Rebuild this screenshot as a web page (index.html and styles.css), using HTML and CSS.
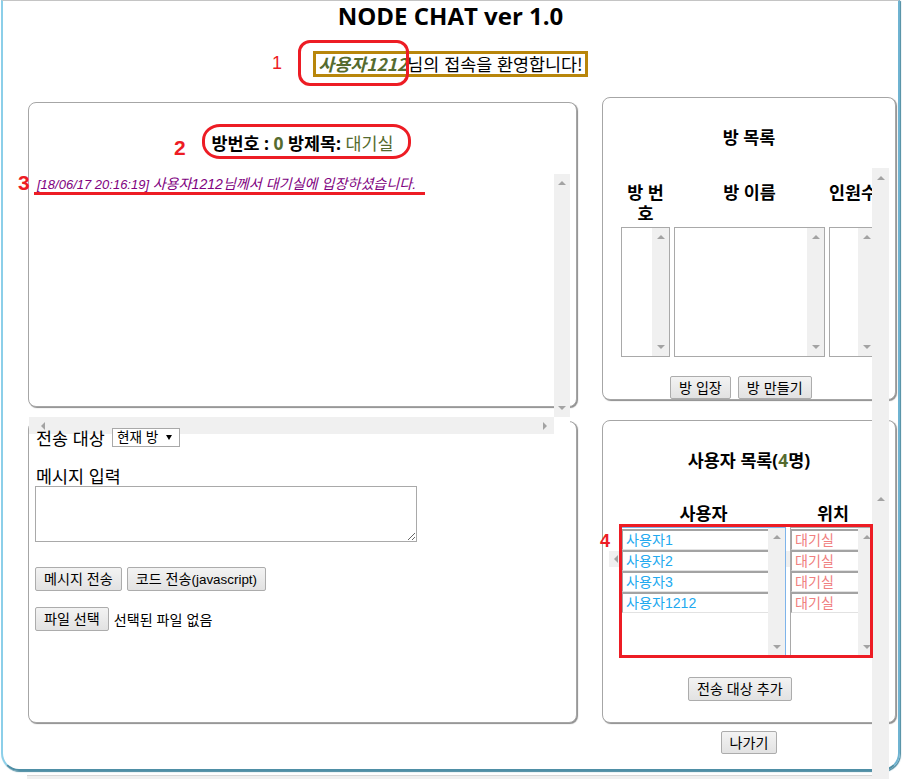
FILE: index.html
```html
<!DOCTYPE html>
<html lang="ko">
<head>
<meta charset="utf-8">
<title>NODE CHAT</title>
<link rel="stylesheet" href="styles.css">
</head>
<body>
<div class="page">
  <h1 class="title">NODE CHAT ver 1.0</h1>
  <div class="welcome-row"><span class="welcome"><b class="nick">사용자1212</b>님의 접속을 환영합니다!</span></div>
  <div class="main">
    <div class="col-left">
      <section class="panel panel-chat">
        <h2 class="panel-title">방번호 : <span class="olive">0</span> 방제목: <span class="olive thin">대기실</span></h2>
        <div class="log">
          <div class="log-body"><p class="msg">[18/06/17 20:16:19] <span class="ko">사용자1212님께서 대기실에 입장하셨습니다.</span></p></div>
          <div class="sb"><i class="up"></i><i class="down"></i></div>
          <div class="hsb"><i class="left"></i><i class="right"></i></div>
          <div class="corner"></div>
        </div>
      </section>
      <section class="panel panel-send">
        <div class="row-target"><span class="label">전송 대상</span><span class="select">현재 방<i class="caret"></i></span></div>
        <div class="label msg-label">메시지 입력</div>
        <textarea class="input"></textarea>
        <div class="btn-row"><button class="btn">메시지 전송</button><button class="btn">코드 전송<span class="lat">(javascript)</span></button></div>
        <div class="file-row"><button class="btn">파일 선택</button><span class="file-text">선택된 파일 없음</span></div>
      </section>
    </div>
    <div class="col-right">
      <section class="panel panel-rooms">
        <h3 class="panel-title">방 목록</h3>
        <div class="room-grid">
          <div class="th">방 번 호</div>
          <div class="th">방 이름</div>
          <div class="th nowrap">인원수</div>
          <div class="listbox"><div class="lb-items"></div><div class="sb"><i class="up"></i><i class="down"></i></div></div>
          <div class="listbox"><div class="lb-items"></div><div class="sb"><i class="up"></i><i class="down"></i></div></div>
          <div class="listbox"><div class="lb-items"></div><div class="sb"><i class="up"></i><i class="down"></i></div></div>
        </div>
        <div class="room-btns"><button class="btn btn-sm">방 입장</button><button class="btn btn-sm">방 만들기</button></div>
      </section>
      <section class="panel panel-users">
        <h3 class="panel-title">사용자 목록(<span class="olive">4</span>명)</h3>
        <div class="peek-bar"><i class="left"></i></div>
        <div class="user-grid">
          <div class="th">사용자</div>
          <div class="th">위치</div>
          <div class="listbox focus">
            <div class="lb-items">
              <div class="opt user">사용자1</div>
              <div class="opt user">사용자2</div>
              <div class="opt user">사용자3</div>
              <div class="opt user">사용자1212</div>
            </div>
            <div class="sb"><i class="up"></i><i class="down"></i></div>
          </div>
          <div class="listbox">
            <div class="lb-items">
              <div class="opt loc">대기실</div>
              <div class="opt loc">대기실</div>
              <div class="opt loc">대기실</div>
              <div class="opt loc">대기실</div>
            </div>
            <div class="sb"><i class="up"></i><i class="down"></i></div>
          </div>
        </div>
        <button class="btn add-btn">전송 대상 추가</button>
      </section>
      <button class="btn btn-sm exit-btn">나가기</button>
    </div>
  </div>
</div>
<div class="page-hbar"></div>

<div class="side-strip"><i class="up"></i><i class="up second"></i></div>

<div class="mark m1">1</div>
<div class="ring r1"></div>
<div class="mark m2">2</div>
<div class="ring r2"></div>
<div class="mark m3">3</div>
<div class="underline u3"></div>
<div class="mark m4">4</div>
<div class="ring r4"></div>
</body>
</html>
```
FILE: styles.css
```css
* { box-sizing: border-box; }
html, body { margin: 0; padding: 0; }
body {
  background: #fff;
  color: #000;
  font-family: "Liberation Sans", "Noto Sans CJK KR", sans-serif;
  font-size: 14px;
  height: 779px;
  overflow: hidden;
}

.page {
  margin-left: 1px;
  width: 899px;
  height: 771px;
  border-top: 1px solid #c4c4c4;
  border-left: 2px solid #8ccfe9;
  border-right: 2px solid #6fb3d1;
  border-bottom: 2px solid #4f8fa6;
  border-radius: 0 0 18px 18px;
  box-shadow: 1px 1px 1px #4a8aa0;
}

.title {
  margin: 0;
  font: bold 24px/30px "Open Sans", "Noto Sans CJK KR", sans-serif;
  text-align: center;
}

.welcome-row {
  margin-top: 20px;
  display: flex;
  justify-content: center;
}
.welcome {
  display: block;
  border: 3px solid #b8860b;
  padding: 0 2px;
  font: 17.4px/20px "Noto Sans CJK KR", sans-serif;
}
.nick { font-style: italic; font-weight: bold; color: #556b2f; }
.olive { color: #556b2f; }
.thin { font-weight: normal; }

.main {
  display: flex;
  align-items: flex-start;
  gap: 25px;
  padding-left: 25px;
  margin-top: 20px;
}
.col-left { width: 549px; margin-top: 5px; display: flex; flex-direction: column; gap: 14px; }
.col-right { width: 294px; display: flex; flex-direction: column; }

.panel {
  position: relative;
  background: #fff;
  border: 1px solid #a6a6a6;
  border-radius: 8px;
  box-shadow: 1px 1px 1px #8c8c8c;
}
.panel-title {
  margin: 0;
  font: bold 17.4px/20px "Open Sans", "Noto Sans CJK KR", sans-serif;
  text-align: center;
}

/* chat panel */
.panel-chat { height: 305px; padding-top: 30px; }
.log {
  position: relative;
  z-index: 2;
  margin-top: 21px;
  width: 541px;
  height: 260px;
  display: grid;
  grid-template-columns: 1fr 16px;
  grid-template-rows: 1fr 17px;
}
.log-body { padding: 2px 8px; }
.msg {
  margin: 0;
  color: #800080;
  font-style: italic;
  font-size: 13px;
  line-height: 16px;
}
.msg .ko { font-size: 14.1px; }
.corner { background: #fff; }

/* fake scrollbars */
.sb {
  width: 17px;
  flex: none;
  background: #f0f0f0;
  display: flex;
  flex-direction: column;
  justify-content: space-between;
  align-items: center;
  padding: 7px 0;
}
.log .sb { width: 16px; }
.hsb {
  background: #f0f0f0;
  display: flex;
  justify-content: space-between;
  align-items: center;
  padding: 0 7px 0 12px;
}
i.up, i.down, i.left, i.right { display: block; width: 0; height: 0; }
i.up { border-left: 4px solid transparent; border-right: 4px solid transparent; border-bottom: 4px solid #a3a3a3; }
i.down { border-left: 4px solid transparent; border-right: 4px solid transparent; border-top: 4px solid #a3a3a3; }
i.left { border-top: 4px solid transparent; border-bottom: 4px solid transparent; border-right: 4px solid #a3a3a3; }
i.right { border-top: 4px solid transparent; border-bottom: 4px solid transparent; border-left: 4px solid #a3a3a3; }

/* send panel */
.panel-send { height: 302px; padding: 6px 0 0 6px; }
.panel-send > * { position: relative; z-index: 3; }
.label { font: 17.4px/20px "Noto Sans CJK KR", sans-serif; }
.row-target { display: flex; align-items: center; height: 19px; padding-left: 1px; }
.select {
  display: flex;
  align-items: center;
  justify-content: space-between;
  margin-left: 7px;
  width: 68px;
  height: 19px;
  border: 1px solid #a9a9a9;
  background: #fff;
  padding: 0 7px 0 4px;
  font-size: 13.6px;
  line-height: 17px;
}
.caret { display: block; width: 0; height: 0; border-left: 3px solid transparent; border-right: 3px solid transparent; border-top: 5px solid #000; }
.msg-label { margin-top: 19px; padding-left: 1px; }
.input {
  display: block;
  margin: 0;
  width: 382px;
  height: 56px;
  border: 1px solid #a9a9a9;
  font: 13px "Liberation Sans", sans-serif;
}
.btn-row { display: flex; gap: 5px; margin-top: 25px; }
.file-row { display: flex; align-items: center; gap: 5px; margin-top: 16px; }
.file-text { font-size: 14.1px; }

.btn {
  display: block;
  height: 24px;
  margin: 0;
  padding: 0 8px;
  border: 1px solid #acacac;
  border-radius: 2px;
  background: linear-gradient(#f3f3f3, #e2e2e2);
  color: #000;
  font: 14.1px/20px "Liberation Sans", "Noto Sans CJK KR", sans-serif;
  white-space: nowrap;
}
.btn .lat { font-size: 13.4px; }
.btn-sm { height: 23px; }

/* rooms panel */
.panel-rooms { height: 303px; padding-top: 29px; }
.th {
  font: bold 17.4px/21px "Open Sans", "Noto Sans CJK KR", sans-serif;
  text-align: center;
  align-self: start;
}
.th.nowrap { white-space: nowrap; }
.room-grid {
  margin: 35px 0 0 18px;
  display: grid;
  grid-template-columns: 49px 151px 47px;
  grid-template-rows: auto 130px;
  column-gap: 4px;
  row-gap: 3px;
}
.listbox {
  display: flex;
  height: 130px;
  border: 1px solid #a9a9a9;
  background: #fff;
}
.listbox.focus { border-color: #7eb4ea; }
.lb-items { flex: 1; min-width: 0; padding-top: 1px; }
.room-btns { display: flex; gap: 7px; margin: 19px 0 0 67px; }

/* users panel */
.panel-users { height: 303px; margin-top: 20px; padding-top: 29px; }
.user-grid {
  position: relative;
  z-index: 1;
  margin: 33px 0 0 18px;
  display: grid;
  grid-template-columns: 165px 86px;
  grid-template-rows: 20px 130px;
  column-gap: 4px;
  row-gap: 4px;
}
.user-grid .th { line-height: 20px; }
.opt {
  height: 21px;
  border-top: 2px solid #a3a3a3;
  border-left: 1px solid #a3a3a3;
  border-bottom: 1px solid #e2e2e2;
  padding-left: 3px;
  font-size: 14.1px;
  line-height: 18px;
  white-space: nowrap;
  overflow: hidden;
}
.user { color: #22a9ef; }
.loc { color: #f08080; }
.peek-bar {
  position: absolute;
  left: 6px;
  top: 130px;
  width: 182px;
  height: 16px;
  background: #f0f0f0;
  display: flex;
  align-items: center;
  padding-left: 5px;
}
.add-btn { margin: 20px 0 0 85px; }
.exit-btn { margin: 8px auto 0; }

.page-hbar {
  margin: 4px 0 0 27px;
  width: 845px;
  height: 4px;
  border-top: 1px solid #d6d6d6;
  background: #f0f0f0;
}

/* overlay scrollbar strip */
.side-strip {
  position: absolute;
  left: 872px;
  top: 168px;
  width: 17px;
  height: 611px;
  z-index: 5;
  background: #f0f0f0;
  display: flex;
  flex-direction: column;
  align-items: center;
  padding-top: 8px;
}
.side-strip .second { margin-top: 317px; }

/* red annotations drawn on the screenshot */
.mark {
  position: absolute;
  z-index: 10;
  color: #ed1c24;
  font: bold 21px/21px "Liberation Sans", sans-serif;
}
.m1 { left: 272px; top: 54px; font-weight: normal; font-size: 18px; line-height: 18px; }
.m2 { left: 174px; top: 137px; }
.m3 { left: 18px; top: 172px; }
.m4 { left: 600px; top: 532px; font-size: 18px; line-height: 18px; }
.ring {
  position: absolute;
  z-index: 10;
  border: 3px solid #ed1c24;
}
.r1 { left: 298px; top: 40px; width: 111px; height: 46px; border-radius: 12px; }
.r2 { left: 202px; top: 124px; width: 209px; height: 35px; border-radius: 18px / 16px; }
.r4 { left: 619px; top: 524px; width: 254px; height: 134px; }
.underline {
  position: absolute;
  z-index: 10;
  left: 34px;
  top: 192px;
  width: 391px;
  height: 3px;
  background: #ed1c24;
}
```
